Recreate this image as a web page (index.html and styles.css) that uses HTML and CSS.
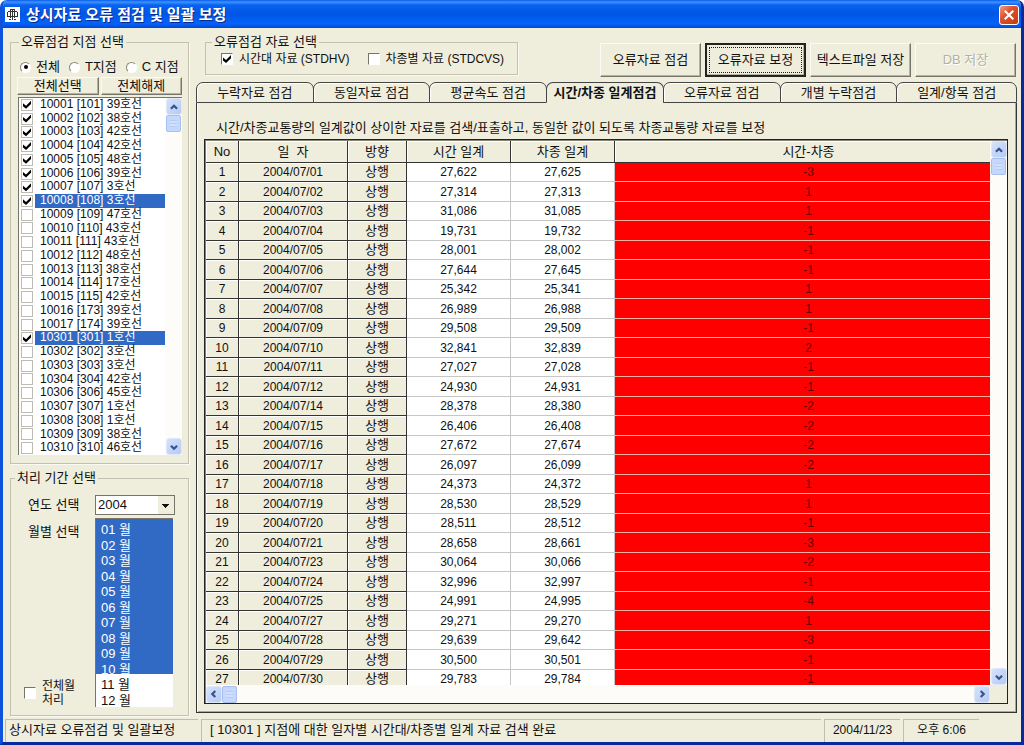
FILE: index.html
```html
<!DOCTYPE html>
<html lang="ko">
<head>
<meta charset="utf-8">
<title>상시자료 오류 점검 및 일괄 보정</title>
<link rel="stylesheet" href="styles.css">
</head>
<body>
<div class="window">
  <header class="titlebar">
    <svg class="app-icon" viewBox="0 0 15 15" aria-hidden="true">
      <rect width="15" height="15" fill="#fff"/>
      <path d="M5 2.500h5M3 4.500h9M2.500 5v5M12.500 5v5M5.500 3v8M9.500 3v8M7.500 2v11M2.500 9.500h10M4 12.500h2M9 12.500h2" stroke="#333" fill="none"/>
    </svg>
    <h1 class="title">상시자료 오류 점검 및 일괄 보정</h1>
    <button class="close" type="button" aria-label="닫기">
      <svg viewBox="0 0 19 19"><path d="M5 5l9 9M14 5l-9 9" stroke="#fff" stroke-width="2.200" fill="none"/></svg>
    </button>
  </header>

  <main class="main">
    <div class="side">
      <fieldset class="group stations">
        <legend>오류점검 지점 선택</legend>
        <div class="radios">
          <label><input class="radio" type="radio" name="kind" checked>전체</label>
          <label><input class="radio" type="radio" name="kind">T지점</label>
          <label><input class="radio" type="radio" name="kind">C 지점</label>
        </div>
        <div class="pair">
          <button class="btn" type="button">전체선택</button>
          <button class="btn" type="button">전체해제</button>
        </div>
        <div class="listbox">
          <ul class="station-list" id="stations"></ul>
          <div class="vbar">
            <button class="sb" type="button" aria-label="위로"><svg viewBox="0 0 16 16"><path d="M4.500 10L8 6.500l3.500 3.500"/></svg></button>
            <span class="thumb"></span>
            <button class="sb end" type="button" aria-label="아래로"><svg viewBox="0 0 16 16"><path d="M4.500 6.500L8 10l3.500-3.500"/></svg></button>
          </div>
        </div>
      </fieldset>

      <fieldset class="group period">
        <legend>처리 기간 선택</legend>
        <div class="period-grid">
          <label for="year">연도 선택</label>
          <select class="year" id="year"><option>2004</option></select>
          <div class="month-side">
            <label for="months">월별 선택</label>
            <label class="all-months"><input class="check" type="checkbox"><span>전체월<br>처리</span></label>
          </div>
          <select class="months" id="months" multiple size="12">
            <option selected>01 월</option>
            <option selected>02 월</option>
            <option selected>03 월</option>
            <option selected>04 월</option>
            <option selected>05 월</option>
            <option selected>06 월</option>
            <option selected>07 월</option>
            <option selected>08 월</option>
            <option selected>09 월</option>
            <option selected>10 월</option>
            <option>11 월</option>
            <option>12 월</option>
          </select>
        </div>
      </fieldset>
    </div>

    <div class="work">
      <div class="toolbar">
        <fieldset class="group source">
          <legend>오류점검 자료 선택</legend>
          <label><input class="check" type="checkbox" checked>시간대 자료 (STDHV)</label>
          <label><input class="check" type="checkbox">차종별 자료 (STDCVS)</label>
        </fieldset>
        <div class="actions">
          <button class="btn" type="button">오류자료 점검</button>
          <button class="btn current" type="button">오류자료 보정</button>
          <button class="btn" type="button">텍스트파일 저장</button>
          <button class="btn" type="button" disabled>DB 저장</button>
        </div>
      </div>

      <div class="tabs" role="tablist">
        <button class="tab" type="button" role="tab">누락자료 점검</button>
        <button class="tab" type="button" role="tab">동일자료 점검</button>
        <button class="tab" type="button" role="tab">평균속도 점검</button>
        <button class="tab active" type="button" role="tab" aria-selected="true">시간/차종 일계점검</button>
        <button class="tab" type="button" role="tab">오류자료 점검</button>
        <button class="tab" type="button" role="tab">개별 누락점검</button>
        <button class="tab" type="button" role="tab">일계/항목 점검</button>
      </div>

      <section class="panel">
        <p class="note">시간/차종교통량의 일계값이 상이한 자료를 검색/표출하고, 동일한 값이 되도록 차종교통량 자료를 보정</p>
        <div class="sheet">
          <div class="viewport">
            <table class="data">
              <colgroup><col class="c-no"><col class="c-date"><col class="c-dir"><col class="c-sum"><col class="c-sum"><col></colgroup>
              <thead><tr><th>No</th><th>일 &nbsp;자</th><th>방향</th><th>시간 일계</th><th>차종 일계</th><th>시간-차종</th></tr></thead>
              <tbody id="rows"></tbody>
            </table>
          </div>
          <div class="vbar">
            <button class="sb" type="button" aria-label="위로"><svg viewBox="0 0 16 16"><path d="M4.500 10L8 6.500l3.500 3.500"/></svg></button>
            <span class="thumb"></span>
            <button class="sb end" type="button" aria-label="아래로"><svg viewBox="0 0 16 16"><path d="M4.500 6.500L8 10l3.500-3.500"/></svg></button>
          </div>
          <div class="hbar">
            <button class="sb" type="button" aria-label="왼쪽"><svg viewBox="0 0 16 16"><path d="M9.500 4.500L6 8l3.500 3.500"/></svg></button>
            <span class="thumb"></span>
            <button class="sb end" type="button" aria-label="오른쪽"><svg viewBox="0 0 16 16"><path d="M6.500 4.500L10 8l-3.500 3.500"/></svg></button>
          </div>
          <span class="corner"></span>
        </div>
      </section>
    </div>
  </main>

  <footer class="status">
    <span>상시자료 오류점검 및 일괄보정</span>
    <span class="message">[ 10301 ] 지점에 대한 일자별 시간대/차종별 일계 자료 검색 완료</span>
    <span class="center">2004/11/23</span>
    <span class="center">오후 6:06</span>
  </footer>
</div>
<script src="app.js"></script>
</body>
</html>
```

FILE: styles.css
```css
* { box-sizing: border-box; }

body, button, select, input {
  font-family: "Liberation Sans", "Noto Sans CJK KR", sans-serif;
  font-size: 13px;
  line-height: 14px;
  color: #111;
}
body { margin: 0; background: #fff; }
button { padding: 0; white-space: nowrap; }

.window {
  display: flex;
  flex-direction: column;
  height: 100vh;
  border: solid #0a2a9c;
  border-width: 0 3px 3px;
  border-left-color: #0f52dc;
  border-radius: 7px 7px 0 0;
  background: #efeddc;
  overflow: hidden;
}

.titlebar {
  display: flex;
  align-items: center;
  gap: 6px;
  flex: 0 0 28px;
  margin: 0 -3px;
  padding: 1px 5px 0;
  background: linear-gradient(#0a5ae8 0, #3a94ff 2px, #0a62f0 5px, #0056e4 14px, #0462fa 24px, #0348cc 28px);
}
.app-icon { width: 15px; height: 15px; }
.title {
  flex: 1;
  margin: 0;
  font-size: 15px;
  line-height: 20px;
  color: #fff;
  text-shadow: 1px 1px #0a2a8c;
}
.close {
  width: 20px;
  height: 20px;
  border: 1px solid #fff;
  border-radius: 3px;
  background: linear-gradient(135deg, #f0a088, #e0502c 40%, #c03c14);
}
.close svg { display: block; width: 18px; height: 18px; }

.main {
  display: grid;
  grid-template-columns: 179px minmax(0, 1fr);
  gap: 7px;
  flex: 1;
  min-height: 0;
  padding: 7px 4px 3px 7px;
}
.side { display: flex; flex-direction: column; gap: 7px; min-height: 0; }

.group {
  margin: 0;
  border: 1px solid #c4c1b0;
  box-shadow: 1px 1px #fbfaf2;
  min-width: 0;
}
.group legend { height: 14px; padding: 0 2px; }
.stations legend { margin-left: 2px; }
.source legend { margin-left: -9px; }
.period legend { margin-left: -13px; }
.group label { display: flex; align-items: center; white-space: nowrap; }

.check, .radio {
  appearance: none;
  display: grid;
  place-items: center;
  flex: none;
  width: 12px;
  height: 12px;
  margin: 0;
  background: #fff;
  border: 1px solid #fff;
  border-top-color: #77746a;
  border-left-color: #77746a;
}
.check:checked::before {
  content: "";
  width: 8px;
  height: 8px;
  background: #000;
  clip-path: polygon(0 30%, 38% 62%, 100% 0, 100% 40%, 38% 100%, 0 68%);
}
.radio { width: 11px; height: 11px; border-radius: 50%; border-color: #8a877a #fff #fff #8a877a; }
.radio:checked::before { content: ""; width: 4px; height: 4px; border-radius: 50%; background: #000; }

.btn {
  border: 1px solid;
  border-color: #fbfaf4 #77746a #77746a #fbfaf4;
  box-shadow: inset -1px -1px #b5b2a2;
  background: #efeddc;
}
.btn:disabled { color: #b4b1a2; text-shadow: 1px 1px #fff; }
.btn.current { border: 2px solid #222; outline: 1px dotted #222; outline-offset: -5px; }

.stations { display: flex; flex-direction: column; flex: 1; min-height: 0; padding: 9px 6px 8px; }
.radios { display: flex; gap: 9px; height: 18px; padding-left: 3px; }
.radios .radio { margin-right: 5px; }
.pair { display: grid; grid-template-columns: 1fr 1fr; gap: 2px; margin: 1px 0 2px; }
.pair .btn { height: 18px; }

.listbox {
  display: grid;
  grid-template-columns: minmax(0, 1fr) 17px;
  flex: 1;
  min-height: 0;
  margin-left: 1px;
  border: solid #77746a;
  border-width: 1px 0 0 1px;
  background: #fff;
}
.station-list {
  display: grid;
  grid-auto-rows: 1fr;
  margin: 0;
  padding: 0;
  font-size: 12px;
  list-style: none;
}
.station-list label { height: 100%; padding-left: 2px; gap: 2px; line-height: 13px; }
.station-list .check { border: 1px solid #bdbbb4; }
.station-list span { flex: 1; height: 100%; padding-left: 5px; }
.station-list .picked span { background: #316ac5; color: #fff; }

.vbar, .hbar { display: flex; background: #fdfcf8; }
.vbar { flex-direction: column; align-items: center; }
.hbar { align-items: center; }
.sb {
  flex: none;
  width: 16px;
  height: 17px;
  border: 1px solid #dfe8fb;
  border-radius: 3px;
  background: linear-gradient(135deg, #d6e2fc, #b6caf4);
}
.sb svg { display: block; width: 14px; height: 14px; fill: none; stroke: #34548c; stroke-width: 2.500; }
.vbar .end { margin-top: auto; }
.hbar .end { margin-left: auto; }
.thumb {
  flex: none;
  width: 15px;
  height: 17px;
  border: 1px solid #a8c0f0;
  border-radius: 2px;
  background: repeating-linear-gradient(#b4ccf8 0 1px, #d2e0fd 1px 3px) center / 7px 7px no-repeat #c6d7fc;
}

.period { flex: none; padding: 10px 13px 8px 17px; }
.period-grid {
  display: grid;
  grid-template-columns: 67px minmax(0, 1fr);
  row-gap: 3px;
}
.year {
  appearance: none;
  height: 20px;
  padding: 0 2px;
  border: 1px solid #77746a;
  border-radius: 0;
  background:
    linear-gradient(#111, #111) right 5px top 8px / 7px 1px no-repeat,
    linear-gradient(#111, #111) right 6px top 9px / 5px 1px no-repeat,
    linear-gradient(#111, #111) right 7px top 10px / 3px 1px no-repeat,
    linear-gradient(#111, #111) right 8px top 11px / 1px 1px no-repeat,
    linear-gradient(#efeddc, #efeddc) right / 16px 100% no-repeat,
    #fff;
}
.month-side { display: flex; flex-direction: column; justify-content: space-between; padding: 7px 0 0; }
.month-side .all-months { gap: 6px; margin-left: -4px; font-size: 12px; line-height: 14px; }
.months {
  width: 78px;
  height: 189px;
  padding: 0;
  border: solid #77746a;
  border-width: 1px 0 0 1px;
  border-radius: 0;
  background: #fff;
  overflow: hidden;
}
.months option { height: 16px; min-height: 0; padding: 0 5px; line-height: 14px; color: #111; }
.months option:nth-child(even) { height: 15px; }
.months option:checked { background: linear-gradient(#316ac5, #316ac5); color: #fff; }

.work { display: flex; flex-direction: column; min-width: 0; min-height: 0; }
.toolbar { display: flex; justify-content: space-between; padding-left: 9px; }
.source { display: flex; gap: 18px; height: 40px; padding: 2px 13px 0 15px; font-size: 12px; }
.source legend { font-size: 13px; }
.source label { height: 16px; }
.source .check { margin-right: 6px; }
.actions { display: grid; grid-template-columns: repeat(4, 101px); gap: 4px; height: 34px; margin-top: 8px; padding-right: 1px; }

.tabs { display: grid; grid-template-columns: repeat(6, 117fr) 121fr; flex: none; height: 21px; margin-top: 5px; }
.tab {
  min-width: 0;
  margin-right: -1px;
  border: 1px solid #444;
  border-radius: 7px 7px 0 0;
  box-shadow: inset 1px 1px #fff;
  background: #efeddc;
}
.tab:last-child { margin-right: 0; }
.tab.active { border-bottom-color: #efeddc; box-shadow: none; font-weight: bold; }

.panel {
  display: flex;
  flex-direction: column;
  flex: 1;
  min-height: 0;
  margin-bottom: 3px;
  padding: 18px 8px 8px 7px;
  border: solid #333;
  border-width: 0 1px 1px;
  box-shadow: inset 1px 0 #fff, inset -1px -1px #aaa798;
}
.note { margin: 0 0 4px; padding-left: 12px; white-space: nowrap; overflow: hidden; }
.sheet {
  display: grid;
  grid-template: minmax(0, 1fr) 18px / minmax(0, 1fr) 17px;
  flex: 1;
  min-height: 0;
  border: 1px solid #222;
  box-shadow: inset 1px 1px #85827a;
  padding: 1px 0 0 1px;
  background: #fff;
}
.viewport { overflow: hidden; }
.corner { background: #efeddc; }

.data { width: 100%; table-layout: fixed; border-collapse: separate; border-spacing: 0; }
.c-no { width: 33px; }
.c-date { width: 109px; }
.c-dir { width: 59px; }
.c-sum { width: 104px; }
.data th, .data td { padding: 0; text-align: center; font-weight: normal; white-space: nowrap; }
.data th {
  height: 22px;
  border: solid #333;
  border-width: 0 1px 1px 0;
  background: #efeddc;
  box-shadow: inset 1px 1px #fff;
}
.data tbody { font-size: 12px; }
.data tbody tr { height: 19px; }
.data tbody tr:nth-child(even) { height: 20px; }
.data td { border: solid #c6c6c6; border-width: 0 1px 1px 0; line-height: 14px; background: #fff; }
.data tbody th { height: auto; }
.data tbody th:nth-child(3) { font-size: 13px; }
.data td:last-child { background: #f00; color: #6a0000; border-color: #ffb0a0; border-right: 0; }
.data tr > :last-child { padding-left: 12px; border-right: 0; }

.status {
  display: grid;
  grid-template-columns: 193px minmax(0, 1fr) 76px 76px;
  gap: 3px;
  flex: 0 0 23px;
  padding: 0 42px 0 2px;
}
.status span {
  padding: 3px 3px 0;
  border: solid #c0bdac;
  border-width: 1px 0 0 1px;
  white-space: nowrap;
  overflow: hidden;
}
.status .message { padding-left: 8px; }
.status .center { font-size: 12px; text-align: center; }
```

FILE: app.js
```js
const stations = [
  ["10001", "101", "39"], ["10002", "102", "38"], ["10003", "103", "42"], ["10004", "104", "42"],
  ["10005", "105", "48"], ["10006", "106", "39"], ["10007", "107", "3"], ["10008", "108", "3"],
  ["10009", "109", "47"], ["10010", "110", "43"], ["10011", "111", "43"], ["10012", "112", "48"],
  ["10013", "113", "38"], ["10014", "114", "17"], ["10015", "115", "42"], ["10016", "173", "39"],
  ["10017", "174", "39"], ["10301", "301", "1"], ["10302", "302", "3"], ["10303", "303", "3"],
  ["10304", "304", "42"], ["10306", "306", "45"], ["10307", "307", "1"], ["10308", "308", "1"],
  ["10309", "309", "38"], ["10310", "310", "46"]
];
const checked = new Set([0, 1, 2, 3, 4, 5, 6, 7, 17]);
const picked = new Set([7, 17]);

document.getElementById("stations").innerHTML = stations.map(([id, code, road], i) =>
  `<li class="${picked.has(i) ? "picked" : ""}"><label><input class="check" type="checkbox"${checked.has(i) ? " checked" : ""}><span>${id} [${code}] ${road}호선</span></label></li>`
).join("");

const rows = [
  ["01", "27,622", "27,625", "-3"], ["02", "27,314", "27,313", "1"], ["03", "31,086", "31,085", "1"],
  ["04", "19,731", "19,732", "-1"], ["05", "28,001", "28,002", "-1"], ["06", "27,644", "27,645", "-1"],
  ["07", "25,342", "25,341", "1"], ["08", "26,989", "26,988", "1"], ["09", "29,508", "29,509", "-1"],
  ["10", "32,841", "32,839", "2"], ["11", "27,027", "27,028", "-1"], ["12", "24,930", "24,931", "-1"],
  ["14", "28,378", "28,380", "-2"], ["15", "26,406", "26,408", "-2"], ["16", "27,672", "27,674", "-2"],
  ["17", "26,097", "26,099", "-2"], ["18", "24,373", "24,372", "1"], ["19", "28,530", "28,529", "1"],
  ["20", "28,511", "28,512", "-1"], ["21", "28,658", "28,661", "-3"], ["23", "30,064", "30,066", "-2"],
  ["24", "32,996", "32,997", "-1"], ["25", "24,991", "24,995", "-4"], ["27", "29,271", "29,270", "1"],
  ["28", "29,639", "29,642", "-3"], ["29", "30,500", "30,501", "-1"], ["30", "29,783", "29,784", "-1"]
];

document.getElementById("rows").innerHTML = rows.map(([day, hourly, byType, diff], i) =>
  `<tr><th>${i + 1}</th><th>2004/07/${day}</th><th>상행</th><td>${hourly}</td><td>${byType}</td><td>${diff}</td></tr>`
).join("");
```
